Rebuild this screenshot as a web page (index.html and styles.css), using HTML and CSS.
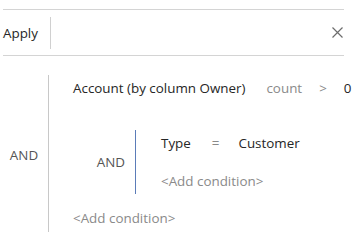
FILE: index.html
```
<!DOCTYPE html>
<html lang="en">
  <head>
    <meta charset="UTF-8" />
    <title>Filter</title>
    <link rel="stylesheet" href="styles.css">
  </head>
  <body>
    <!-- toolbar -->
    <div class="toolbar">
      <span class="apply">Apply</span>
      <span class="sep"></span>
      <span class="spacer"></span>
      <svg class="close" width="11" height="11" viewBox="0 0 11 11">
        <path d="M0.5 0.5 L10.5 10.5 M10.5 0.5 L0.5 10.5" stroke="#6d6d6d" stroke-width="1.2" fill="none" />
      </svg>
    </div>

    <!-- outer group -->
    <div class="group outer">
      <div class="group-label">AND</div>
      <div class="group-body">
        <div class="row">
          <span class="field">Account (by column Owner)</span>
          <span class="op muted">count</span>
          <span class="op cmp muted">&gt;</span>
          <span class="val short">0</span>
        </div>

        <div class="group inner">
          <div class="group-label">AND</div>
          <div class="group-body">
            <div class="row">
              <span class="field">Type</span>
              <span class="op muted">=</span>
              <span class="val">Customer</span>
            </div>
            <div class="row add">&lt;Add condition&gt;</div>
          </div>
        </div>

        <div class="row add last">&lt;Add condition&gt;</div>
      </div>
    </div>
  </body>
</html>
```

FILE: styles.css
```
body {
  margin: 0;
  padding: 0;
  background-color: #fff;
  font-family: "Open Sans", sans-serif;
  font-size: 13.4px;
  color: #262626;
}

.toolbar {
  display: flex;
  align-items: center;
  margin: 9px 13px 0 3px;
  height: 45px;
  border-top: 1px solid #d4d4d4;
  border-bottom: 1px solid #d4d4d4;
}

.sep {
  width: 1px;
  height: 32px;
  background-color: #d0d0d0;
  margin-left: 12px;
}

.spacer {
  flex: 1;
}

.close {
  margin-right: 1px;
}

/* groups */
.group {
  display: flex;
}

.group-label {
  display: flex;
  align-items: center;
  color: #555;
}

.outer {
  margin-top: 19px;
}

.outer > .group-label {
  width: 48px;
  justify-content: center;
  padding-top: 3px;
}

.outer > .group-body {
  border-left: 1px solid #c8c8c8;
  padding-left: 24px;
  padding-bottom: 1px;
}

.inner {
  margin-top: 29px;
}

.inner > .group-label {
  width: 52px;
  justify-content: flex-end;
  padding-right: 10px;
}

.inner > .group-body {
  border-left: 1px solid #5b7cb8;
  padding-left: 25px;
}

.row {
  display: flex;
  align-items: center;
  height: 26px;
  white-space: nowrap;
}

.op {
  margin-left: 21px;
}

.op.cmp {
  margin-left: 17px;
}

.val {
  margin-left: 19px;
}

.val.short {
  margin-left: 17px;
}

.muted {
  color: #8a8a8a;
}

.add {
  color: #8a8a8a;
  margin-top: 12px;
}

.row.last {
  margin-top: 11px;
}
```
